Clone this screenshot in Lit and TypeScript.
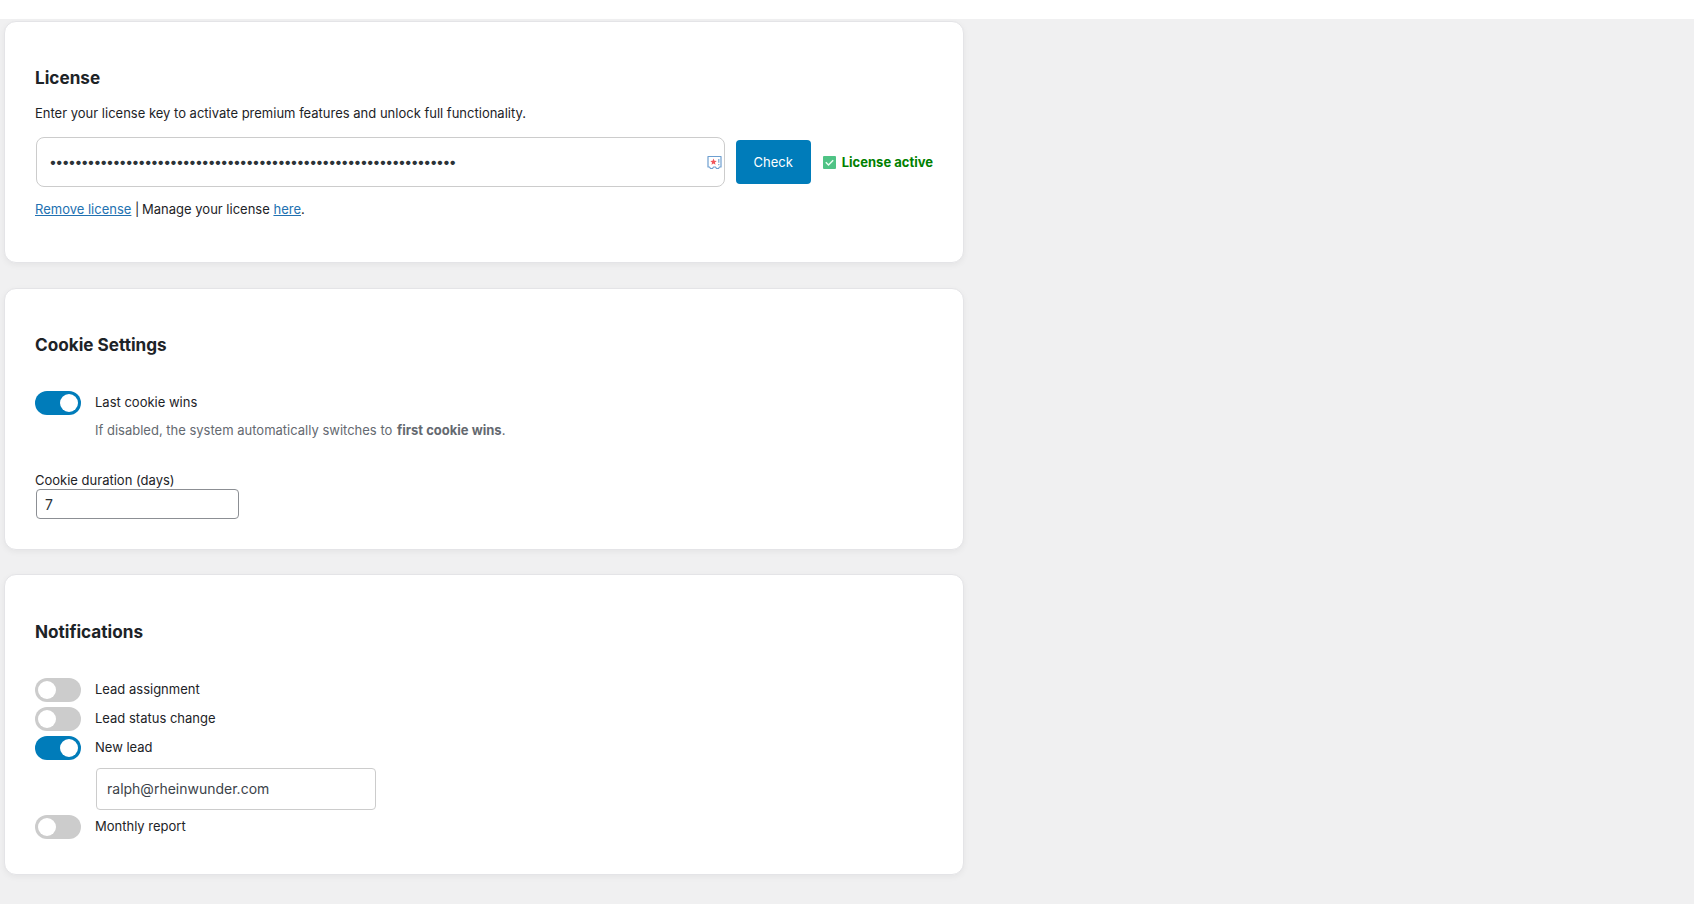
import { LitElement, html, css } from "lit";
import { customElement } from "lit/decorators.js";

@customElement("app-root")
export class AppRoot extends LitElement {
  static styles = css`
    :host { display: block; height: 904px; background: #f0f0f1; font-family: Inter, "Noto Sans", sans-serif; font-size: 13px; color: #1d2327; overflow: hidden; }
    * { box-sizing: border-box; }
    .topbar { height: 19px; background: #fff; }
    .content { width: 960px; margin-left: 4px; padding-top: 2px; display: flex; flex-direction: column; gap: 25px; }
    .card { background: #fff; border: 1px solid #e4e4e7; border-radius: 12px; box-shadow: 0 2px 6px rgba(0,0,0,.05); padding: 0 30px; }
    .card.license { height: 242px; padding-top: 45px; }
    .card.cookie { height: 262px; padding-top: 45px; }
    .card.notify { height: 301px; padding-top: 46px; margin-top: -1px; }
    h2 { margin: 0; font-size: 17.15px; line-height: 22px; font-weight: 700; color: #1d2327; }
    .desc { margin: 14px 0 0; line-height: 20px; }
    .keyrow { display: flex; align-items: center; margin-top: 14px; height: 50px; }
    .keybox { position: relative; width: 689px; height: 50px; margin-left: 1px; }
    .key { width: 100%; height: 100%; border: 1px solid #ccc; border-radius: 8px; padding: 0 12px 2px; font: 14px Inter, sans-serif; letter-spacing: -1.53px; color: #2c3338; background: #fff; outline: none; }
    .keyicon { position: absolute; right: 3px; top: 18px; }
    .check { margin-left: 11px; width: 75px; height: 44px; border: 0; border-radius: 4px; background: #007cba; color: #fff; font: 13px Inter, sans-serif; }
    .status { display: flex; align-items: center; margin-left: 12px; gap: 6px; font-weight: 700; color: #008000; white-space: nowrap; }
    .links { margin: 12px 0 0; line-height: 20px; }
    a { color: #2271b1; text-decoration: underline; }
    .sep { color: #1d2327; margin-right: -1px; }
    .row { display: flex; align-items: center; gap: 14px; height: 24px; }
    .rowlabel { padding-bottom: 2px; }
    .first { margin-top: 35px; }
    .toggle { flex: none; width: 46px; height: 24px; border-radius: 12px; background: #ccc; position: relative; }
    .toggle.on { background: #007cba; }
    .knob { position: absolute; top: 3px; left: 3px; width: 18px; height: 18px; border-radius: 50%; background: #fff; }
    .toggle.on .knob { left: 25px; }
    .help { margin: 5px 0 0 60px; line-height: 20px; color: #646970; }
    .help b { font-weight: 700; margin-left: 1px; }
    .durlabel { display: block; margin-top: 32px; line-height: 16px; }
    .days { display: block; width: 203px; height: 30px; margin: 1px 0 0 1px; border: 1px solid #8c8f94; border-radius: 4px; padding: 0 8px; font: 14px Inter, sans-serif; color: #2c3338; background: #fff; outline: none; }
    .stack { display: flex; flex-direction: column; gap: 5px; margin-top: 35px; }
    .email { display: block; width: 280px; height: 42px; margin: 3px 0 0 61px; border: 1px solid #ccc; border-radius: 4px; padding: 0 10px 2px; font: 14px Inter, sans-serif; color: #3c434a; background: #fff; outline: none; }
  `;

  private toggle(on: boolean, label: string) {
    return html`<div class="row">
      <span class="toggle ${on ? "on" : ""}"><span class="knob"></span></span>
      <span class="rowlabel">${label}</span>
    </div>`;
  }

  render() {
    return html`
      <div class="topbar"></div>
      <div class="content">
        <section class="card license">
          <h2>License</h2>
          <p class="desc">Enter your license key to activate premium features and unlock full functionality.</p>
          <div class="keyrow">
            <div class="keybox">
              <input class="key" type="password" .value=${"x".repeat(64)} />
              <svg class="keyicon" width="15" height="15" viewBox="0 0 15 15" aria-hidden="true">
                <path d="M1 1.500h13v10.500h-1.500l-1 1.500h-2l-1-1.500h-2l-1 1.500h-2l-1-1.500H1z" fill="#fff" stroke="#6e9fd0" stroke-width="1.200" stroke-linejoin="round"/>
                <path d="M6.500 3.500l.9 2.300 2.300.2-1.800 1.500.6 2.300-2-1.200-2 1.200.6-2.300L3.300 6l2.300-.2z" fill="#f0555a"/>
                <path d="M11.800 4v3.800M11.800 9v1.200" stroke="#6e9fd0" stroke-width="1.100"/>
              </svg>
            </div>
            <button class="check">Check</button>
            <span class="status">
              <svg width="13" height="13" viewBox="0 0 13 13" aria-hidden="true">
                <rect width="13" height="13" rx="1" fill="#4fc385"/>
                <path d="M2.800 6.300l2.700 2.700L10.200 4.200" fill="none" stroke="#e9fff2" stroke-width="1.500"/>
              </svg>
              License active
            </span>
          </div>
          <p class="links"><a href="#">Remove license</a> <span class="sep">|</span> Manage your license <a href="#">here</a>.</p>
        </section>

        <section class="card cookie">
          <h2>Cookie Settings</h2>
          <div class="first">${this.toggle(true, "Last cookie wins")}</div>
          <p class="help">If disabled, the system automatically switches to <b>first cookie wins</b>.</p>
          <label class="durlabel">Cookie duration (days)</label>
          <input class="days" type="text" value="7" />
        </section>

        <section class="card notify">
          <h2>Notifications</h2>
          <div class="stack">
            ${this.toggle(false, "Lead assignment")}
            ${this.toggle(false, "Lead status change")}
            ${this.toggle(true, "New lead")}
            <input class="email" type="text" value="ralph@rheinwunder.com" />
            ${this.toggle(false, "Monthly report")}
          </div>
        </section>
      </div>
    `;
  }
}
